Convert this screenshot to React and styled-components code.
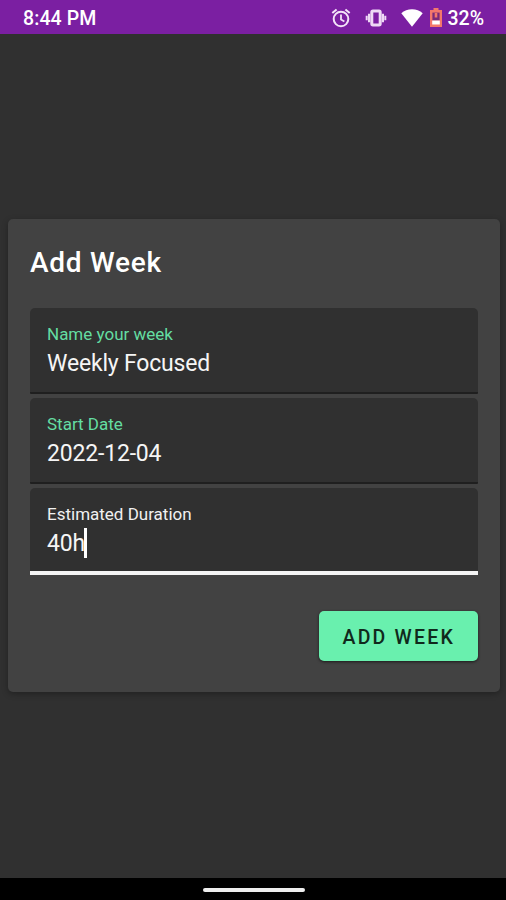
import React from 'react';
import styled, { createGlobalStyle } from 'styled-components';

const fields = [
  { label: 'Name your week', value: 'Weekly Focused' },
  { label: 'Start Date', value: '2022-12-04' },
  { label: 'Estimated Duration', value: '40h', focused: true }
];

const AlarmIcon = () => (
  <svg width="20" height="20" viewBox="0 0 20 20" fill="none" stroke="#f3e3f8" strokeWidth="2">
    <circle cx="10" cy="11" r="7.3" />
    <path d="M1.3 5.1 5.6 1.5M18.7 5.1 14.4 1.5" />
    <path d="M10 6.5v5l3.4 2" strokeWidth="1.8" />
  </svg>
);

const VibrateIcon = () => (
  <svg width="22" height="18" viewBox="0 0 22 18" fill="none" stroke="#eed9f5">
    <rect x="6.8" y="2" width="8.4" height="14" rx="1.2" strokeWidth="3" />
    <path d="M4.1 4.8v8.4M17.9 4.8v8.4" strokeWidth="2.2" />
    <path d="M1.7 6.8v4.4M20.3 6.8v4.4" strokeWidth="2" />
  </svg>
);

const WifiIcon = () => (
  <svg width="22" height="18" viewBox="0 0 22 18">
    <path d="M0.3 4.2C3.2 1.9 6.9.3 11 .3s7.8 1.6 10.7 3.9L11 17.8z" fill="#fff" />
  </svg>
);

const BatteryIcon = () => (
  <svg width="12" height="19" viewBox="0 0 12 19">
    <path d="M3.5 0h5v2H12v17H0V2h3.5z" fill="#f4776b" />
    <path d="M2.4 4.6h7.2v8H2.4z" fill="#7b2a79" />
    <path d="M4.7 5h2.6v4.5H4.7z" fill="#f4776b" />
    <path d="M2.2 12.5h7.6v4H2.2z" fill="#fff" />
  </svg>
);

export default function App() {
  return (
    <SScreen>
      <GlobalStyle />
      <SStatusBar>
        <STime>8:44 PM</STime>
        <SStatusIcons>
          <AlarmIcon />
          <VibrateIcon />
          <WifiIcon />
          <SBattery>
            <BatteryIcon />
            <span>32%</span>
          </SBattery>
        </SStatusIcons>
      </SStatusBar>

      <SMain>
        <SCard>
          <STitle>Add Week</STitle>
          <SFields>
            {fields.map(field => (
              <SField key={field.label} $focused={field.focused}>
                <SLabel $focused={field.focused}>{field.label}</SLabel>
                <SValue>
                  {field.value}
                  {field.focused && <SCaret />}
                </SValue>
              </SField>
            ))}
          </SFields>
          <SButton type="button">ADD WEEK</SButton>
        </SCard>
      </SMain>

      <SNavBar>
        <SHandle />
      </SNavBar>
    </SScreen>
  );
}

// STYLES
const GlobalStyle = createGlobalStyle`
  * {
    box-sizing: border-box;
  }

  body {
    margin: 0;
    background-color: #303030;
    font-family: Roboto, sans-serif;
  }
`;

const SScreen = styled.div`
  display: flex;
  flex-direction: column;
  height: 900px;
  background-color: #303030;
  color: #ffffff;
`;

const SStatusBar = styled.header`
  display: flex;
  justify-content: space-between;
  align-items: center;
  height: 34px;
  padding: 1px 22px 0 23px;
  background-color: #7b1fa2;
  font-size: 19.5px;
  font-weight: 500;
`;

const STime = styled.span`
  line-height: 24px;
  padding-top: 2px;
  letter-spacing: 0.1px;
`;

const SStatusIcons = styled.div`
  display: flex;
  align-items: center;
  gap: 14px;
`;

const SBattery = styled.div`
  display: flex;
  align-items: center;
  gap: 5px;
  margin-left: -7px;

  span {
    line-height: 24px;
    padding-top: 2px;
  }
`;

const SMain = styled.main`
  flex: 1;
  padding: 185px 6px 0 8px;
`;

const SCard = styled.section`
  display: flex;
  flex-direction: column;
  height: 473px;
  padding: 26px 22.5px 30px 22px;
  border-radius: 5px;
  background-color: #424242;
  box-shadow: 0 2px 6px rgba(0, 0, 0, 0.3);
`;

const STitle = styled.h1`
  margin: 0 0 27px;
  font-size: 28px;
  font-weight: 500;
  line-height: 36px;
  letter-spacing: 0.75px;
`;

const SFields = styled.div`
  display: flex;
  flex-direction: column;
  gap: 4px;
`;

const SField = styled.div`
  height: ${props => (props.$focused ? '87px' : '86px')};
  padding: 15px 17px 0;
  border-bottom: ${props => (props.$focused ? '4px solid #f5f5f5' : '2px solid #1f1f1f')};
  border-radius: ${props => (props.$focused ? '5px 5px 0 0' : '5px 5px 1px 1px')};
  background-color: #303030;
`;

const SLabel = styled.div`
  margin-bottom: 2px;
  font-size: 17px;
  line-height: 22px;
  color: ${props => (props.$focused ? '#f0f0f0' : '#64dda2')};
`;

const SValue = styled.div`
  display: flex;
  align-items: center;
  height: 34px;
  font-size: 23px;
  line-height: 34px;
  letter-spacing: -0.18px;
  color: #f5f5f5;
`;

const SCaret = styled.span`
  width: 3px;
  height: 30px;
  margin: -3px 0 0 -1px;
  background-color: #ffffff;
`;

const SButton = styled.button`
  align-self: flex-end;
  width: 158.5px;
  height: 50px;
  margin-top: 36px;
  padding: 2px 0 0 1px;
  border: 0;
  border-radius: 5px;
  background-color: #69f0ae;
  box-shadow: 0 1px 3px rgba(0, 0, 0, 0.6);
  color: #10291c;
  font-family: inherit;
  font-size: 19.5px;
  font-weight: 500;
  letter-spacing: 2.2px;
`;

const SNavBar = styled.footer`
  display: flex;
  justify-content: center;
  height: 22px;
  padding: 10px 0 0 2px;
  background-color: #000000;
`;

const SHandle = styled.div`
  width: 102px;
  height: 4px;
  border-radius: 2px;
  background-color: #eeeeee;
`;
